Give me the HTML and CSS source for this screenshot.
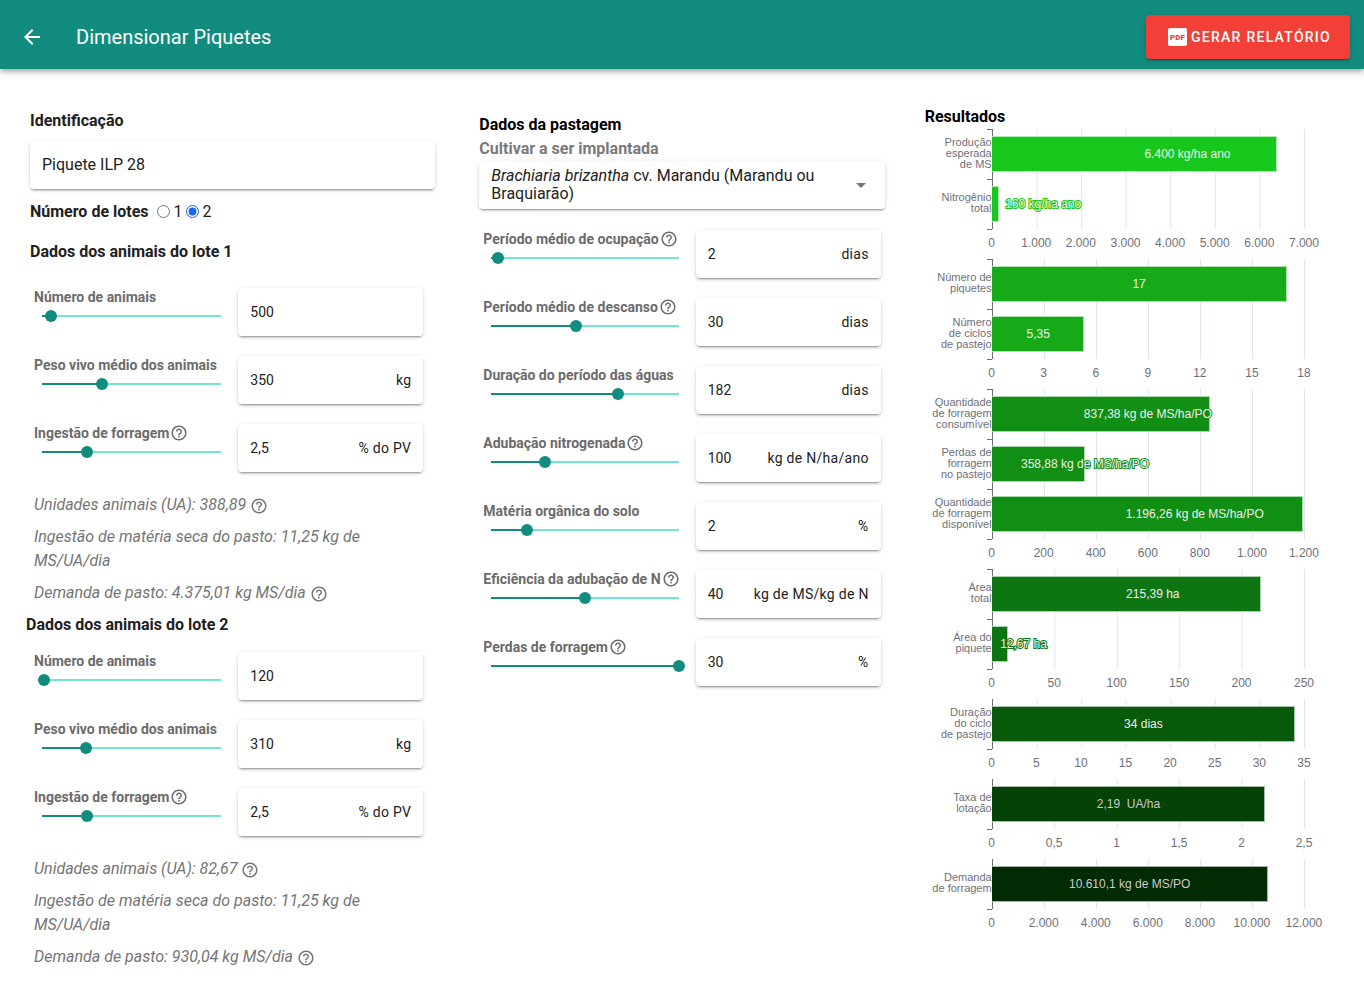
FILE: index.html
```html
<!DOCTYPE html>
<html lang="pt-BR">
<head>
<meta charset="utf-8">
<meta name="viewport" content="width=device-width, initial-scale=1">
<title>Dimensionar Piquetes</title>
<link rel="stylesheet" href="styles.css">
</head>
<body>
<svg class="sprite" aria-hidden="true">
  <symbol id="help" viewBox="0 0 24 24"><path d="M11 18h2v-2h-2v2zm1-16C6.48 2 2 6.48 2 12s4.48 10 10 10 10-4.48 10-10S17.52 2 12 2zm0 18c-4.41 0-8-3.59-8-8s3.59-8 8-8 8 3.59 8 8-3.59 8-8 8zm0-14c-2.21 0-4 1.79-4 4h2c0-1.1.9-2 2-2s2 .9 2 2c0 2-3 1.75-3 5h2c0-2.25 3-2.5 3-5 0-2.21-1.79-4-4-4z"/></symbol>
</svg>

<header class="topbar">
  <button class="back" type="button" aria-label="Voltar">
    <svg viewBox="0 0 24 24" aria-hidden="true"><path d="M20 11H7.83l5.59-5.59L12 4l-8 8 8 8 1.41-1.41L7.83 13H20v-2z"/></svg>
  </button>
  <h1 class="topbar-title">Dimensionar Piquetes</h1>
  <button class="report" type="button">
    <svg class="pdf" viewBox="0 0 20 20" aria-hidden="true"><rect x="0" y="1" width="19" height="18" rx="2"/><text x="9.5" y="13" text-anchor="middle">PDF</text></svg>
    <span>GERAR RELATÓRIO</span>
  </button>
</header>

<main class="columns">
  <section class="col">
    <label class="heading" for="ident">Identificação</label>
    <div class="card ident"><input class="text big" id="ident" type="text" value="Piquete ILP 28"></div>

    <div class="lots" role="radiogroup" aria-labelledby="lots-label">
      <span class="heading" id="lots-label">Número de lotes</span>
      <input class="radio" type="radio" name="lots" id="lots1"><label for="lots1">1</label>
      <input class="radio" type="radio" name="lots" id="lots2" checked><label for="lots2">2</label>
    </div>

    <h2 class="heading lot-heading">Dados dos animais do lote 1</h2>
    <div class="params lot">
      <div class="param">
        <div class="control"><label class="name" for="n1">Número de animais</label><input class="slider" type="range" aria-label="Número de animais" min="0" max="10000" value="500" style="--fill:5%"></div>
        <div class="card"><input class="text" id="n1" type="text" value="500"></div>
      </div>
      <div class="param">
        <div class="control"><label class="name" for="p1">Peso vivo médio dos animais</label><input class="slider" type="range" aria-label="Peso vivo médio" min="200" max="650" value="350" style="--fill:33.3%"></div>
        <div class="card"><input class="text" id="p1" type="text" value="350"><span class="unit">kg</span></div>
      </div>
      <div class="param">
        <div class="control"><label class="name" for="i1">Ingestão de forragem<svg class="help"><use href="#help"/></svg></label><input class="slider" type="range" aria-label="Ingestão de forragem" min="2" max="4" step="0.1" value="2.5" style="--fill:25%"></div>
        <div class="card"><input class="text" id="i1" type="text" value="2,5"><span class="unit">% do PV</span></div>
      </div>
    </div>
    <div class="summary">
      <p>Unidades animais (UA): 388,89 <svg class="help"><use href="#help"/></svg></p>
      <p>Ingestão de matéria seca do pasto: 11,25 kg de MS/UA/dia</p>
      <p>Demanda de pasto: 4.375,01 kg MS/dia <svg class="help"><use href="#help"/></svg></p>
    </div>

    <h2 class="heading lot-heading second">Dados dos animais do lote 2</h2>
    <div class="params lot">
      <div class="param">
        <div class="control"><label class="name" for="n2">Número de animais</label><input class="slider" type="range" aria-label="Número de animais" min="0" max="10000" value="120" style="--fill:1.2%"></div>
        <div class="card"><input class="text" id="n2" type="text" value="120"></div>
      </div>
      <div class="param">
        <div class="control"><label class="name" for="p2">Peso vivo médio dos animais</label><input class="slider" type="range" aria-label="Peso vivo médio" min="200" max="650" value="310" style="--fill:24.4%"></div>
        <div class="card"><input class="text" id="p2" type="text" value="310"><span class="unit">kg</span></div>
      </div>
      <div class="param">
        <div class="control"><label class="name" for="i2">Ingestão de forragem<svg class="help"><use href="#help"/></svg></label><input class="slider" type="range" aria-label="Ingestão de forragem" min="2" max="4" step="0.1" value="2.5" style="--fill:25%"></div>
        <div class="card"><input class="text" id="i2" type="text" value="2,5"><span class="unit">% do PV</span></div>
      </div>
    </div>
    <div class="summary">
      <p>Unidades animais (UA): 82,67 <svg class="help"><use href="#help"/></svg></p>
      <p>Ingestão de matéria seca do pasto: 11,25 kg de MS/UA/dia</p>
      <p>Demanda de pasto: 930,04 kg MS/dia <svg class="help"><use href="#help"/></svg></p>
    </div>
  </section>

  <section class="col pasture">
    <h2 class="heading strong">Dados da pastagem</h2>
    <label class="heading muted" for="cultivar">Cultivar a ser implantada</label>
    <div class="card cultivar">
      <select class="cultivar-select" id="cultivar"><option>Brachiaria brizantha cv. Marandu (Marandu ou Braquiarão)</option></select>
      <span class="cultivar-text" aria-hidden="true"><i>Brachiaria brizantha</i> cv. Marandu (Marandu ou Braquiarão)</span>
      <svg class="arrow" viewBox="0 0 10 5" aria-hidden="true"><path d="M0 0h10L5 5z"/></svg>
    </div>
    <div class="params">
      <div class="param">
        <div class="control"><label class="name" for="oc">Período médio de ocupação<svg class="help"><use href="#help"/></svg></label><input class="slider" type="range" aria-label="Período médio de ocupação" min="1" max="28" value="2" style="--fill:3.7%"></div>
        <div class="card"><input class="text" id="oc" type="text" value="2"><span class="unit">dias</span></div>
      </div>
      <div class="param">
        <div class="control"><label class="name" for="de">Período médio de descanso<svg class="help"><use href="#help"/></svg></label><input class="slider" type="range" aria-label="Período médio de descanso" min="1" max="65" value="30" style="--fill:45.3%"></div>
        <div class="card"><input class="text" id="de" type="text" value="30"><span class="unit">dias</span></div>
      </div>
      <div class="param">
        <div class="control"><label class="name" for="ag">Duração do período das águas</label><input class="slider" type="range" aria-label="Duração do período das águas" min="1" max="269" value="182" style="--fill:67.5%"></div>
        <div class="card"><input class="text" id="ag" type="text" value="182"><span class="unit">dias</span></div>
      </div>
      <div class="param">
        <div class="control"><label class="name" for="ad">Adubação nitrogenada<svg class="help"><use href="#help"/></svg></label><input class="slider" type="range" aria-label="Adubação nitrogenada" min="0" max="350" value="100" style="--fill:28.6%"></div>
        <div class="card"><input class="text" id="ad" type="text" value="100"><span class="unit">kg de N/ha/ano</span></div>
      </div>
      <div class="param">
        <div class="control"><label class="name" for="mo">Matéria orgânica do solo</label><input class="slider" type="range" aria-label="Matéria orgânica do solo" min="0" max="10.5" step="0.1" value="2" style="--fill:19%"></div>
        <div class="card"><input class="text" id="mo" type="text" value="2"><span class="unit">%</span></div>
      </div>
      <div class="param">
        <div class="control"><label class="name" for="ef">Eficiência da adubação de N<svg class="help"><use href="#help"/></svg></label><input class="slider" type="range" aria-label="Eficiência da adubação de N" min="10" max="70" value="40" style="--fill:50%"></div>
        <div class="card"><input class="text" id="ef" type="text" value="40"><span class="unit">kg de MS/kg de N</span></div>
      </div>
      <div class="param">
        <div class="control"><label class="name" for="pe">Perdas de forragem<svg class="help"><use href="#help"/></svg></label><input class="slider" type="range" aria-label="Perdas de forragem" min="0" max="30" value="30" style="--fill:100%"></div>
        <div class="card"><input class="text" id="pe" type="text" value="30"><span class="unit">%</span></div>
      </div>
    </div>
  </section>

  <section class="col results">
    <h2 class="heading strong">Resultados</h2>

    <div class="chart multi production" style="--steps:7">
      <div class="cat"><span class="cat-name">Produção<br>esperada<br>de MS</span><div class="lane"><div class="bar" style="width:91.4%"></div><span class="value" style="left:62.7%">6.400 kg/ha ano</span></div></div>
      <div class="cat"><span class="cat-name">Nitrogênio<br>total</span><div class="lane"><div class="bar" style="width:2.3%"></div><span class="value" style="left:16.5%"><b>160 kg/ha ano</b></span></div></div>
      <div class="ticks"><span>0</span><span>1.000</span><span>2.000</span><span>3.000</span><span>4.000</span><span>5.000</span><span>6.000</span><span>7.000</span></div>
    </div>

    <div class="chart multi paddocks" style="--steps:6">
      <div class="cat"><span class="cat-name">Número de<br>piquetes</span><div class="lane"><div class="bar" style="width:94.4%"></div><span class="value" style="left:47.2%">17</span></div></div>
      <div class="cat"><span class="cat-name">Número<br>de ciclos<br>de pastejo</span><div class="lane"><div class="bar" style="width:29.7%"></div><span class="value" style="left:14.9%">5,35</span></div></div>
      <div class="ticks"><span>0</span><span>3</span><span>6</span><span>9</span><span>12</span><span>15</span><span>18</span></div>
    </div>

    <div class="chart multi forage" style="--steps:6">
      <div class="cat"><span class="cat-name">Quantidade<br>de forragem<br>consumível</span><div class="lane"><div class="bar" style="width:69.8%"></div><span class="value" style="left:50%">837,38 kg de MS/ha/P<b>O</b></span></div></div>
      <div class="cat"><span class="cat-name">Perdas de<br>forragem<br>no pastejo</span><div class="lane"><div class="bar" style="width:29.9%"></div><span class="value" style="left:29.9%">358,88 kg d<b>e MS/ha/PO</b></span></div></div>
      <div class="cat"><span class="cat-name">Quantidade<br>de forragem<br>disponível</span><div class="lane"><div class="bar" style="width:99.7%"></div><span class="value" style="left:65%">1.196,26 kg de MS/ha/PO</span></div></div>
      <div class="ticks"><span>0</span><span>200</span><span>400</span><span>600</span><span>800</span><span>1.000</span><span>1.200</span></div>
    </div>

    <div class="chart multi area" style="--steps:5">
      <div class="cat"><span class="cat-name">Área<br>total</span><div class="lane"><div class="bar" style="width:86.2%"></div><span class="value" style="left:51.6%">215,39 ha</span></div></div>
      <div class="cat"><span class="cat-name">Área do<br>piquete</span><div class="lane"><div class="bar" style="width:5.1%"></div><span class="value" style="left:10.2%">1<b>2,67 ha</b></span></div></div>
      <div class="ticks"><span>0</span><span>50</span><span>100</span><span>150</span><span>200</span><span>250</span></div>
    </div>

    <div class="chart cycle" style="--steps:7">
      <div class="cat"><span class="cat-name">Duração<br>do ciclo<br>de pastejo</span><div class="lane"><div class="bar" style="width:97.1%"></div><span class="value" style="left:48.6%">34 dias</span></div></div>
      <div class="ticks"><span>0</span><span>5</span><span>10</span><span>15</span><span>20</span><span>25</span><span>30</span><span>35</span></div>
    </div>

    <div class="chart stocking" style="--steps:5">
      <div class="cat"><span class="cat-name">Taxa de<br>lotação</span><div class="lane"><div class="bar" style="width:87.6%"></div><span class="value" style="left:43.8%">2,19&nbsp; UA/ha</span></div></div>
      <div class="ticks"><span>0</span><span>0,5</span><span>1</span><span>1,5</span><span>2</span><span>2,5</span></div>
    </div>

    <div class="chart demand" style="--steps:6">
      <div class="cat"><span class="cat-name">Demanda<br>de forragem</span><div class="lane"><div class="bar" style="width:88.4%"></div><span class="value" style="left:44.2%">10.610,1 kg de MS/PO</span></div></div>
      <div class="ticks"><span>0</span><span>2.000</span><span>4.000</span><span>6.000</span><span>8.000</span><span>10.000</span><span>12.000</span></div>
    </div>
  </section>
</main>
</body>
</html>
```

FILE: styles.css
```css
* { box-sizing: border-box; }

body {
  margin: 0;
  background: #fff;
  color: #212121;
  font: 16px/24px Roboto, sans-serif;
}

h1, h2, p { margin: 0; }

.sprite { display: none; }

/* Top bar */
.topbar {
  display: flex;
  align-items: center;
  padding: 15px 14px 10px 20px;
  background: #128c7e;
  box-shadow: 0 2px 4px -1px rgba(0, 0, 0, .2), 0 4px 5px rgba(0, 0, 0, .14), 0 1px 10px rgba(0, 0, 0, .12);
}

.back {
  width: 24px;
  height: 24px;
  padding: 0;
  border: 0;
  background: none;
}

.back svg { display: block; fill: #fff; }

.topbar-title {
  flex: 1;
  margin-left: 32px;
  color: #fff;
  font-size: 20px;
  font-weight: 400;
}

.report {
  display: flex;
  align-items: center;
  gap: 3px;
  height: 44px;
  padding: 0 19px 0 22px;
  border: 0;
  border-radius: 4px;
  background: #f24038;
  color: #fff;
  font: 500 14px/20px Roboto, sans-serif;
  letter-spacing: 0.09em;
  box-shadow: 0 3px 1px -2px rgba(0, 0, 0, .2), 0 2px 2px rgba(0, 0, 0, .14), 0 1px 5px rgba(0, 0, 0, .12);
}

.pdf { width: 20px; height: 20px; fill: #fff; }
.pdf text { fill: #f24038; font: 900 8px Roboto, sans-serif; letter-spacing: 0; }

/* Columns */
.columns {
  display: grid;
  grid-template-columns: repeat(3, minmax(0, 1fr));
  align-items: start;
  padding: 40px 8px 16px;
}

.col { padding: 0 22px; }
.pasture { padding-top: 4px; }
.results { padding: 0 52px 0 18px; }

.heading {
  display: block;
  font-size: 16px;
  font-weight: 700;
  line-height: 24px;
}

.strong { color: #000; }
.muted { color: #7a7a7a; }
.results > .heading { margin-top: -4px; }

.card {
  display: flex;
  align-items: center;
  height: 48px;
  padding: 0 12px;
  border-radius: 4px;
  background: #fff;
  box-shadow: 0 3px 1px -2px rgba(0, 0, 0, .2), 0 2px 2px rgba(0, 0, 0, .14), 0 1px 5px rgba(0, 0, 0, .12);
}

.text {
  flex: 1;
  min-width: 0;
  width: 0;
  padding: 0;
  border: 0;
  outline: 0;
  background: none;
  color: #212121;
  font: 14px/20px Roboto, sans-serif;
}

.big { font-size: 16px; }
.unit { font-size: 14px; letter-spacing: 0.02em; white-space: nowrap; }

.ident { margin-top: 8px; }

.lots { display: flex; align-items: center; margin-top: 11px; }
.lots .heading { margin-right: 8px; }
.lots label { margin-left: 4px; margin-right: 3px; }
.radio { width: 13px; height: 13px; margin: 0 0 2px; accent-color: #1667f7; }

.lot-heading { margin-top: 16px; }
.lot-heading.second { margin: 8px 0 0 -4px; }

/* Parameter rows */
.params { display: grid; gap: 20px; padding: 0 4px; margin-top: 21px; }
.lot { padding-right: 12px; margin-top: 24px; }
.second + .lot { margin-top: 15px; }

.param { display: grid; grid-template-columns: minmax(0, 1fr) 185px; gap: 9px; }

.name {
  display: flex;
  align-items: center;
  gap: 1px;
  height: 18px;
  color: #6b6b6b;
  font-size: 14px;
  font-weight: 700;
  line-height: 18px;
  white-space: nowrap;
}

.help { width: 18px; height: 18px; fill: currentColor; }

.slider {
  display: block;
  appearance: none;
  width: calc(100% - 4px);
  height: 12px;
  margin: 4px 2px 0;
  background: linear-gradient(to right, #128c7e var(--fill), #70e5d5 var(--fill)) center / calc(100% - 12px) 2px no-repeat;
}

.slider::-webkit-slider-thumb {
  appearance: none;
  width: 12px;
  height: 12px;
  border-radius: 50%;
  background: #128c7e;
}

.summary {
  display: grid;
  gap: 8px;
  padding: 0 12px 0 4px;
  margin-top: 21px;
  color: #757575;
  font-style: italic;
}

.summary .help { vertical-align: -5px; }

/* Cultivar drop-down: the name of the species is set in italics over the control */
.cultivar {
  display: grid;
  grid-template-columns: minmax(0, 1fr) 10px;
  gap: 24px;
  padding: 0 19px 0 12px;
}

.cultivar > * { grid-row: 1; }

.cultivar-select {
  grid-column: 1 / 3;
  width: 100%;
  height: 48px;
  border: 0;
  outline: 0;
  appearance: none;
  background: none;
  color: transparent;
  font-size: 0;
}

.cultivar-select option { color: #212121; font: 16px/18px Roboto, sans-serif; }

.cultivar-text { grid-column: 1; line-height: 18px; pointer-events: none; }
.arrow { grid-column: 2; width: 10px; height: 5px; fill: #757575; pointer-events: none; }

/* Charts */
.chart {
  color: #6e7079;
  font-family: "Liberation Sans", Arial, sans-serif;
}

.production { --bar: #17c71c; }
.paddocks { --bar: #16aa19; }
.forage { --bar: #118f14; }
.area { --bar: #0d7511; }
.cycle { --bar: #085b0b; }
.stocking { --bar: #044206; }
.demand { --bar: #022a03; }

.cat {
  position: relative;
  display: grid;
  grid-template-columns: 67px minmax(0, 1fr);
  align-items: center;
  height: 50px;
}

.cat::after,
.multi .cat:first-child::before {
  content: "";
  position: absolute;
  left: 62px;
  bottom: -1px;
  width: 5px;
  height: 1px;
  background: #6e7079;
}

.multi .cat:first-child::before { top: 0; bottom: auto; }

.cat-name { padding-bottom: 2px; font-size: 11px; line-height: 11px; text-align: right; }

.lane {
  position: relative;
  height: 50px;
  padding: 7px 0;
  background:
    linear-gradient(#6e7079, #6e7079) 0 0 / 1px 100% no-repeat,
    linear-gradient(to right, #e0e6f1 1px, transparent 1px) 0 0 / calc(100% / var(--steps)) 100%;
  box-shadow: 1px 0 #e0e6f1;
}

.bar {
  height: 36px;
  border: 1px solid color-mix(in srgb, var(--bar) 35%, #fff);
  border-left: 0;
  background: var(--bar);
}

.value {
  position: absolute;
  top: 16px;
  transform: translateX(-50%);
  color: #eee;
  font-size: 12px;
  line-height: 18px;
  white-space: nowrap;
}

.stocking .value,
.demand .value { color: #ccc; }

.value b {
  font-weight: 400;
  -webkit-text-stroke: 2px var(--bar);
  paint-order: stroke;
}

.ticks {
  display: flex;
  justify-content: space-between;
  height: 30px;
  margin-left: 67px;
  padding-top: 5px;
  font-size: 12px;
  line-height: 18px;
}

.ticks span { display: flex; justify-content: center; width: 0; }
```
